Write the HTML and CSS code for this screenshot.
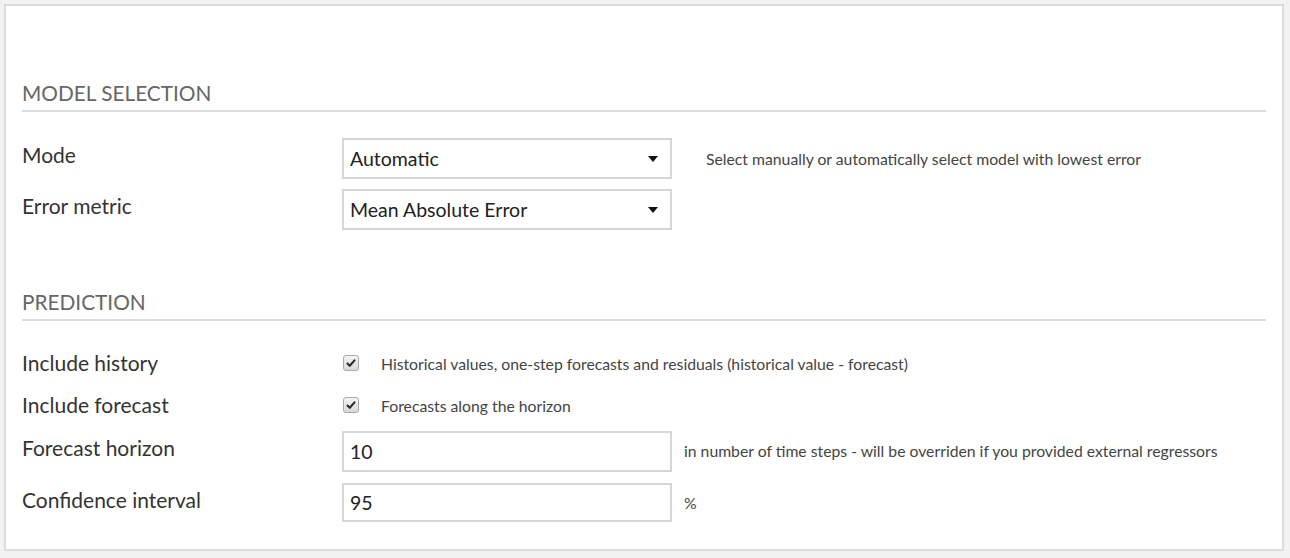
FILE: index.html
```html
<!DOCTYPE html>
<html>
<head>
<meta charset="utf-8">
<link rel="stylesheet" href="styles.css">
</head>
<body>
<div class="card">
  <section class="section first">
    <h2 class="heading">MODEL SELECTION</h2>
    <div class="rows select-rows">
      <div class="row">
        <div class="label">Mode</div>
        <div class="select"><span>Automatic</span><i class="caret"></i></div>
        <div class="help help-select">Select manually or automatically select model with lowest error</div>
      </div>
      <div class="row">
        <div class="label">Error metric</div>
        <div class="select"><span>Mean Absolute Error</span><i class="caret"></i></div>
      </div>
    </div>
  </section>
  <section class="section second">
    <h2 class="heading">PREDICTION</h2>
    <div class="rows pred-rows">
      <div class="row check-row">
        <div class="label">Include history</div>
        <span class="checkbox"><svg viewBox="0 0 16 16" width="16" height="16"><path d="M4 8.6 L6.6 11.2 L12 5" fill="none" stroke="#2b2b2b" stroke-width="2.4" stroke-linecap="round" stroke-linejoin="round"/></svg></span>
        <div class="help help-check">Historical values, one-step forecasts and residuals (historical value - forecast)</div>
      </div>
      <div class="row check-row">
        <div class="label">Include forecast</div>
        <span class="checkbox"><svg viewBox="0 0 16 16" width="16" height="16"><path d="M4 8.6 L6.6 11.2 L12 5" fill="none" stroke="#2b2b2b" stroke-width="2.4" stroke-linecap="round" stroke-linejoin="round"/></svg></span>
        <div class="help help-check">Forecasts along the horizon</div>
      </div>
      <div class="row">
        <div class="label">Forecast horizon</div>
        <div class="input">10</div>
        <div class="help help-input">in number of time steps - will be overriden if you provided external regressors</div>
      </div>
      <div class="row">
        <div class="label">Confidence interval</div>
        <div class="input">95</div>
        <div class="help help-input">%</div>
      </div>
    </div>
  </section>
</div>
</body>
</html>
```
FILE: styles.css
```css
html, body {
  margin: 0;
  padding: 0;
}
body {
  background: #f2f2f2;
  padding: 4px 6px 6px 4px;
  font-family: "Lato", "Open Sans", sans-serif;
  color: #333;
}
.card {
  background: #fff;
  border: 2px solid #dcdcdc;
  height: 543px;
  padding: 0 16px;
  box-sizing: content-box;
}
.section.first {
  padding-top: 74px;
}
.section.second {
  padding-top: 59px;
}
.heading {
  margin: 0;
  font-weight: 400;
  font-size: 20.8px;
  line-height: 26px;
  padding-bottom: 4px;
  color: #666;
  border-bottom: 2px solid #ddd;
}
.rows {
  display: flex;
  flex-direction: column;
}
.select-rows {
  padding-top: 26px;
  gap: 10px;
}
.pred-rows {
  padding-top: 26px;
  gap: 10px;
}
.row {
  display: flex;
  align-items: flex-start;
}
.label {
  width: 320px;
  flex: none;
  font-size: 21px;
  line-height: 34px;
  color: #333;
}
.select, .input {
  width: 330px;
  height: 41px;
  box-sizing: border-box;
  border: 2px solid #d6d6d6;
  display: flex;
  align-items: center;
  padding: 0 6px;
  font-size: 19.5px;
  color: #222;
  flex: none;
}
.select span {
  flex: 1;
}
.caret {
  width: 0;
  height: 0;
  border-left: 5px solid transparent;
  border-right: 5px solid transparent;
  border-top: 6px solid #111;
  margin-right: 6px;
}
.help {
  font-size: 15.75px;
  color: #444;
}
.help-select {
  margin-left: 34px;
  line-height: 41px;
}
.help-input {
  margin-left: 12px;
  line-height: 40px;
}
.check-row {
  align-items: center;
  height: 32px;
}
.check-row .label {
  line-height: 32px;
}
.pred-rows .row:nth-child(4) {
  margin-top: 1px;
}
.pred-rows .row:nth-child(4) .input {
  height: 39px;
}
.checkbox {
  width: 16px;
  height: 16px;
  box-sizing: border-box;
  margin-left: 1px;
  border: 1px solid #a9a9a9;
  border-radius: 3px;
  background: linear-gradient(#f4f4f4, #d9d9d9);
  display: flex;
  align-items: center;
  justify-content: center;
  flex: none;
}
.checkbox svg {
  display: block;
}
.help-check {
  margin-left: 22px;
}
```
